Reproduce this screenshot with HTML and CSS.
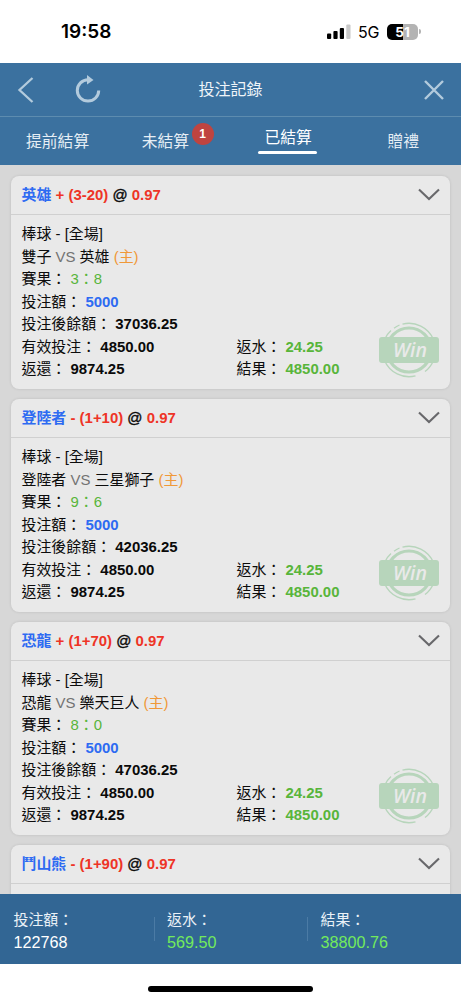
FILE: index.html
```html
<!DOCTYPE html>
<html lang="zh-Hant">
<head>
  <meta charset="UTF-8" />
  <meta name="viewport" content="width=device-width, initial-scale=1.0">
  <title>投注記錄</title>
  <link rel="stylesheet" href="styles.css">
</head>
<body>

  <!-- Icons -->
  <svg class="defs" width="0" height="0">
    <symbol id="chevron" viewBox="0 0 22 13">
      <path d="M1 1.5 L11 11 L21 1.5" fill="none" stroke="#68686b" stroke-width="2.1"/>
    </symbol>
    <symbol id="win" viewBox="0 0 62 58">
      <g fill="none" stroke="#b7d5bb">
        <circle cx="31" cy="29" r="22" stroke-width="3.2"/>
        <path d="M6.5 18.5 A26.7 26.7 0 0 1 13 9.5 M16 7.2 A26.7 26.7 0 0 1 21.5 4 M24.5 3.1 A26.7 26.7 0 0 1 55.5 18.5 M55.5 39.5 A26.7 26.7 0 0 1 47 50.6 M37.5 54.9 A26.7 26.7 0 0 1 6.5 39.5" stroke-width="1.3"/>
      </g>
      <rect x="1" y="16" width="60" height="26" rx="3" fill="#b7d5bb"/>
    </symbol>
  </svg>

  <div class="status">
    <div class="time">19:58</div>
    <div class="status-right">
      <svg width="24" height="16" viewBox="0 0 24 16">
        <rect x="0" y="9.5" width="4.2" height="5.5" rx="1"/>
        <rect x="6.4" y="7" width="4.2" height="8" rx="1"/>
        <rect x="12.8" y="4" width="4.2" height="11" rx="1"/>
        <rect x="19.3" y="0.5" width="4.2" height="14.5" rx="1" fill="#c8c8c8"/>
      </svg>
      <span class="network">5G</span>
      <div class="battery"><span>51</span></div>
    </div>
  </div>

  <div class="header">
    <svg class="back" width="18" height="28" viewBox="0 0 18 28">
      <path d="M15.5 2 L2.5 14 L15.5 26" fill="none" stroke="#b3cbdd" stroke-width="2.3"/>
    </svg>
    <svg class="reload" width="26" height="28" viewBox="0 0 26 28">
      <path d="M13 4.7 A10.7 10.7 0 1 0 23.7 15.4" fill="none" stroke="#b3cbdd" stroke-width="3"/>
      <path d="M12 0 L18.5 4.9 L12 9.5 Z" fill="#b3cbdd"/>
    </svg>
    <h1>投注記錄</h1>
    <svg class="close" width="20" height="20" viewBox="0 0 20 20">
      <path d="M1 1 L19 19 M19 1 L1 19" fill="none" stroke="#b3cbdd" stroke-width="2.4"/>
    </svg>
  </div>

  <div class="tabs">
    <div class="tab"><span>提前結算</span></div>
    <div class="tab has-badge"><span>未結算<b class="badge">1</b></span></div>
    <div class="tab active"><span>已結算</span></div>
    <div class="tab"><span>贈禮</span></div>
  </div>

  <div class="list">
    <div class="card">
      <div class="card-head">
        <div><span class="blue">英雄</span> <span class="red">+ (3-20)</span> <span class="at">@</span> <span class="red">0.97</span></div>
        <svg width="22" height="13"><use href="#chevron"/></svg>
      </div>
      <div class="card-body">
        <p>棒球 - [全場]</p>
        <p>雙子 <span class="gray">VS</span> 英雄 <span class="orange">(主)</span></p>
        <p>賽果： <span class="green">3：8</span></p>
        <p>投注額： <b class="blue">5000</b></p>
        <p>投注後餘額： <b>37036.25</b></p>
        <div class="row"><p>有效投注： <b>4850.00</b></p><p>返水： <b class="green">24.25</b></p></div>
        <div class="row"><p>返還： <b>9874.25</b></p><p>結果： <b class="green">4850.00</b></p></div>
        <div class="stamp"><svg width="62" height="58"><use href="#win"/></svg><span>Win</span></div>
      </div>
    </div>

    <div class="card">
      <div class="card-head">
        <div><span class="blue">登陸者</span> <span class="red">- (1+10)</span> <span class="at">@</span> <span class="red">0.97</span></div>
        <svg width="22" height="13"><use href="#chevron"/></svg>
      </div>
      <div class="card-body">
        <p>棒球 - [全場]</p>
        <p>登陸者 <span class="gray">VS</span> 三星獅子 <span class="orange">(主)</span></p>
        <p>賽果： <span class="green">9：6</span></p>
        <p>投注額： <b class="blue">5000</b></p>
        <p>投注後餘額： <b>42036.25</b></p>
        <div class="row"><p>有效投注： <b>4850.00</b></p><p>返水： <b class="green">24.25</b></p></div>
        <div class="row"><p>返還： <b>9874.25</b></p><p>結果： <b class="green">4850.00</b></p></div>
        <div class="stamp"><svg width="62" height="58"><use href="#win"/></svg><span>Win</span></div>
      </div>
    </div>

    <div class="card">
      <div class="card-head">
        <div><span class="blue">恐龍</span> <span class="red">+ (1+70)</span> <span class="at">@</span> <span class="red">0.97</span></div>
        <svg width="22" height="13"><use href="#chevron"/></svg>
      </div>
      <div class="card-body">
        <p>棒球 - [全場]</p>
        <p>恐龍 <span class="gray">VS</span> 樂天巨人 <span class="orange">(主)</span></p>
        <p>賽果： <span class="green">8：0</span></p>
        <p>投注額： <b class="blue">5000</b></p>
        <p>投注後餘額： <b>47036.25</b></p>
        <div class="row"><p>有效投注： <b>4850.00</b></p><p>返水： <b class="green">24.25</b></p></div>
        <div class="row"><p>返還： <b>9874.25</b></p><p>結果： <b class="green">4850.00</b></p></div>
        <div class="stamp"><svg width="62" height="58"><use href="#win"/></svg><span>Win</span></div>
      </div>
    </div>

    <div class="card">
      <div class="card-head">
        <div><span class="blue">鬥山熊</span> <span class="red">- (1+90)</span> <span class="at">@</span> <span class="red">0.97</span></div>
        <svg width="22" height="13"><use href="#chevron"/></svg>
      </div>
      <div class="card-body"></div>
    </div>
  </div>

  <div class="totals">
    <div class="total">投注額：<span>122768</span></div>
    <div class="total">返水：<span class="lime">569.50</span></div>
    <div class="total">結果：<span class="lime">38800.76</span></div>
  </div>

  <div class="home"><div class="home-bar"></div></div>

</body>
</html>
```
FILE: styles.css
```css
* {
  box-sizing: border-box;
}
html, body {
  margin: 0;
  padding: 0;
  height: 100%;
}
body {
  display: flex;
  flex-direction: column;
  overflow: hidden;
  background: #fff;
  color: #0c0c0c;
  font-family: "Liberation Sans", "Noto Sans CJK TC", sans-serif;
  font-size: 14.95px;
}
svg {
  display: block;
  flex: none;
}
.defs {
  position: absolute;
}

/* status bar */
.status {
  flex: none;
  height: 63px;
  padding: 0 43px 0 61px;
  display: flex;
  justify-content: space-between;
  align-items: center;
  font-family: Inter, sans-serif;
  color: #000;
}
.time {
  font-size: 19px;
  font-weight: 600;
}
.status-right {
  display: flex;
  align-items: center;
}
.network {
  width: 36px;
  padding-left: 7px;
  font-size: 16px;
  letter-spacing: -0.2px;
}
.battery {
  position: relative;
  width: 31px;
  height: 16px;
  border-radius: 5px;
  background: linear-gradient(to right, #000 51%, #b3b3b3 51%);
  color: #fff;
  font-size: 13.5px;
  font-weight: 700;
  line-height: 16px;
  text-align: center;
}
.battery::after {
  content: "";
  position: absolute;
  right: -3px;
  top: 5.5px;
  width: 2px;
  height: 5px;
  border-radius: 0 2px 2px 0;
  background: #b3b3b3;
}

/* header */
.header {
  flex: none;
  height: 54px;
  padding: 0 17px;
  display: grid;
  grid-template-columns: 58px 101px 1fr 159px;
  align-items: center;
  background: #3b719f;
  border-bottom: 1px solid #5d8caf;
}
.header h1 {
  margin: 0;
  font-size: 16px;
  font-weight: 400;
  line-height: 24px;
  text-align: center;
  color: #f0f5f9;
}
.reload {
  margin-top: -2px;
}
.close {
  justify-self: end;
}

/* tabs */
.tabs {
  flex: none;
  height: 48px;
  display: flex;
  background: #3b719f;
  color: #e6eef5;
  font-size: 15.8px;
  line-height: 22px;
}
.tab {
  width: 25%;
  text-align: center;
  padding-top: 14px;
}
.tab span {
  position: relative;
  display: inline-block;
}
.tab.has-badge {
  padding-right: 15px;
}
.tab.active {
  padding-top: 10px;
  color: #fff;
}
.tab.active span {
  height: 28px;
  padding: 0 6px;
}
.tab.active span::after {
  content: "";
  display: block;
  height: 3px;
  margin: 2px -6px 0;
  width: 59px;
  border-radius: 2px;
  background: #fff;
}
.badge {
  position: absolute;
  left: 50px;
  top: -8px;
  width: 22px;
  height: 22px;
  border-radius: 50%;
  background: #bf4440;
  color: #fff;
  font-size: 12px;
  text-align: center;
}

/* bet list */
.list {
  flex: 1;
  min-height: 0;
  overflow: hidden;
  padding: 11px 11px 0 10.5px;
  background: #d7d7d7;
}
.card {
  height: 212.5px;
  margin-bottom: 10.5px;
  border-radius: 8px;
  background: #e9e9e9;
  box-shadow: 0 0 3px rgba(0, 0, 0, 0.12);
}
.card-head {
  height: 38.5px;
  padding: 0 10px 0 11px;
  display: flex;
  justify-content: space-between;
  align-items: center;
  border-bottom: 1.5px solid #d0d0d0;
  font-weight: 700;
  line-height: 22px;
}
.at {
  font-weight: 400;
  -webkit-text-stroke: 0.4px #0c0c0c;
}
.card-body {
  position: relative;
  padding: 8.5px 11px 0;
}
p {
  margin: 0;
  height: 22.5px;
  line-height: 22.5px;
  white-space: nowrap;
}
.card-body b {
  color: #0a0a0a;
}
.row {
  display: grid;
  grid-template-columns: 215px 1fr;
}
.stamp {
  position: absolute;
  right: 10px;
  top: 106px;
}
.stamp span {
  position: absolute;
  left: 0;
  top: 16px;
  width: 64px;
  line-height: 26px;
  text-align: center;
  font-family: "Open Sans", sans-serif;
  font-size: 19.5px;
  font-style: italic;
  font-weight: 600;
  color: #e9e9e9;
}
.blue, .card-body b.blue {
  color: #2e6bf2;
}
.red {
  color: #ee3426;
}
.green, .card-body b.green {
  color: #58b53a;
}
.orange {
  color: #f09838;
}
.gray {
  color: #737373;
}

/* totals */
.totals {
  flex: none;
  height: 70px;
  padding-top: 15px;
  display: flex;
  background: #326694;
  color: #eaf1f7;
}
.total {
  position: relative;
  width: 153.5px;
  height: 45px;
  padding-left: 13.5px;
  line-height: 22.5px;
}
.total + .total::before {
  content: "";
  position: absolute;
  left: 0;
  top: 8px;
  width: 1px;
  height: 24px;
  background: #4b7ba5;
}
.total span {
  display: block;
  font-size: 16.2px;
  color: #fff;
}
.total .lime {
  color: #73ea5c;
}

/* home indicator */
.home {
  flex: none;
  height: 36.5px;
  padding-top: 22.5px;
}
.home-bar {
  width: 165px;
  height: 5.5px;
  margin: 0 auto;
  border-radius: 3px;
  background: #000;
}
```
